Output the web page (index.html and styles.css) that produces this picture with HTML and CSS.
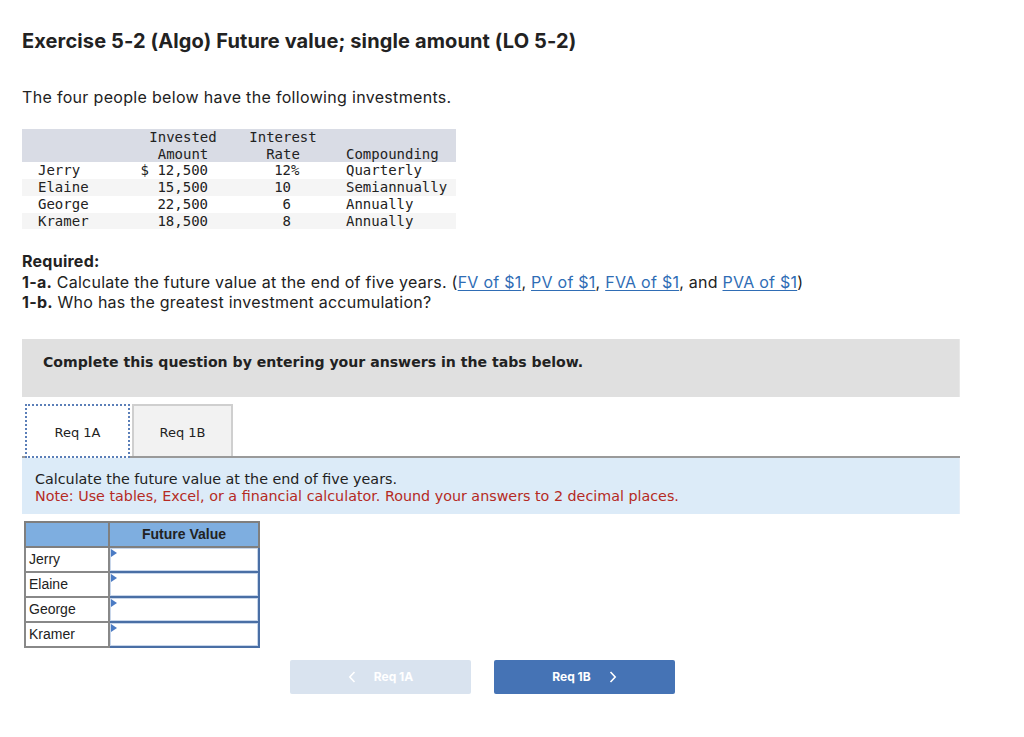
FILE: index.html
```html
<!DOCTYPE html>
<html>
<head>
<meta charset="utf-8">
<link rel="stylesheet" href="styles.css">
</head>
<body>
<div class="page">
  <h1 class="title">Exercise 5-2 (Algo) Future value; single amount (LO 5-2)</h1>
  <p class="intro">The four people below have the following investments.</p>

  <table class="inv">
    <thead>
      <tr>
        <th class="c-name"></th>
        <th class="c-amt">Invested<br>Amount</th>
        <th class="c-rate">Interest<br>Rate</th>
        <th class="c-comp">Compounding</th>
      </tr>
    </thead>
    <tbody>
      <tr><td class="c-name">Jerry</td><td class="c-amt">$ 12,500</td><td class="c-rate">12<span class="pct">%</span></td><td class="c-comp">Quarterly</td></tr>
      <tr class="alt"><td class="c-name">Elaine</td><td class="c-amt">15,500</td><td class="c-rate">10</td><td class="c-comp">Semiannually</td></tr>
      <tr><td class="c-name">George</td><td class="c-amt">22,500</td><td class="c-rate">6</td><td class="c-comp">Annually</td></tr>
      <tr class="alt"><td class="c-name">Kramer</td><td class="c-amt">18,500</td><td class="c-rate">8</td><td class="c-comp">Annually</td></tr>
    </tbody>
  </table>

  <div class="required">
    <div class="req-head">Required:</div>
    <div><b>1-a.</b> Calculate the future value at the end of five years. (<a href="#">FV of $1</a>, <a href="#">PV of $1</a>, <a href="#">FVA of $1</a>, and <a href="#">PVA of $1</a>)</div>
    <div><b>1-b.</b> Who has the greatest investment accumulation?</div>
  </div>

  <div class="complete">Complete this question by entering your answers in the tabs below.</div>

  <div class="tabs">
    <div class="tab active">Req 1A</div>
    <div class="tab">Req 1B</div>
  </div>

  <div class="panel">
    <div>Calculate the future value at the end of five years.</div>
    <div class="note">Note: Use tables, Excel, or a financial calculator. Round your answers to 2 decimal places.</div>
  </div>

  <table class="ans">
    <thead>
      <tr><th class="a-name"></th><th class="a-val">Future Value</th></tr>
    </thead>
    <tbody>
      <tr><td class="a-name">Jerry</td><td class="a-val"><span class="flag"></span></td></tr>
      <tr><td class="a-name">Elaine</td><td class="a-val"><span class="flag"></span></td></tr>
      <tr><td class="a-name">George</td><td class="a-val"><span class="flag"></span></td></tr>
      <tr><td class="a-name">Kramer</td><td class="a-val"><span class="flag"></span></td></tr>
    </tbody>
  </table>

  <div class="nav">
    <div class="btn prev">
      <svg class="chev" width="8" height="12" viewBox="0 0 8 12"><path d="M6.5 1 L1.8 6 L6.5 11" fill="none" stroke="#fff" stroke-width="1.6"/></svg>
      <span>Req 1A</span>
    </div>
    <div class="btn next">
      <span>Req 1B</span>
      <svg class="chev" width="8" height="12" viewBox="0 0 8 12"><path d="M1.5 1 L6.2 6 L1.5 11" fill="none" stroke="#fff" stroke-width="1.6"/></svg>
    </div>
  </div>
</div>
</body>
</html>
```

FILE: styles.css
```css
* { box-sizing: border-box; }
html, body { margin: 0; padding: 0; background: #fff; }
body { font-family: "Inter", "Lato", sans-serif; color: #222; }
.page { padding: 0 64px 0 22px; width: 1024px; }

.title {
  margin: 0;
  padding-top: 29px;
  font-size: 20px;
  line-height: 24px;
  font-weight: 700;
  color: #222;
  letter-spacing: 0.12px;
}
.intro {
  margin: 34px 0 0;
  font-size: 16px;
  line-height: 20px;
  letter-spacing: 0.32px;
}

.inv {
  margin-top: 22px;
  border-collapse: collapse;
  table-layout: fixed;
  font-family: "DejaVu Sans Mono", monospace;
  font-size: 14px;
  line-height: 16.7px;
  color: #222;
}
.inv th { font-weight: 400; background: #d9dce5; vertical-align: bottom; padding: 0; text-align: center; }
.inv td { padding: 0; white-space: nowrap; }
.inv tr.alt td { background: #f5f5f5; }
.inv .c-name { width: 108px; padding-left: 16px; text-align: left; }
.inv .c-amt { width: 106px; }
.inv td.c-amt { text-align: right; padding-right: 28px; }
.inv .c-rate { width: 94px; }
.inv td.c-rate { text-align: right; padding-right: 39px; }
.inv .pct { display: inline-block; width: 0; overflow: visible; }
.inv .c-comp { width: 126px; text-align: left; padding-left: 16px; }
.inv th.c-comp { text-align: left; }

.required { margin-top: 22px; font-size: 16px; line-height: 20.5px; letter-spacing: 0.25px; }
.req-head { font-weight: 700; }
.required b { font-weight: 700; }
.required a { color: #2f6db5; text-decoration: underline; text-underline-offset: 2px; }

.complete {
  margin-top: 26px;
  background: #e0e0e0;
  height: 58px;
  padding: 15px 0 0 21px;
  font-family: "DejaVu Sans", Verdana, sans-serif;
  font-weight: 700;
  font-size: 14.1px;
  color: #222;
  border-right: 1px solid #e8e8e8;
}

.tabs {
  margin-top: 7px;
  display: flex;
  gap: 2px;
  padding-left: 3px;
  border-bottom: 2px solid #9a9a9a;
  height: 54px;
  align-items: flex-end;
}
.tab {
  width: 101px;
  height: 52px;
  background: #f2f2f2;
  border: 2px solid #cfcfcf;
  border-bottom: none;
  font-family: "DejaVu Sans", Verdana, sans-serif;
  font-size: 13px;
  color: #222;
  padding-top: 19px;
  text-align: center;
}
.tab.active {
  width: 105px;
  height: 54px;
  background: #fff;
  border: 2px dotted #5b7fb8;
  margin-bottom: -2px;
  padding-top: 19px;
}

.panel {
  background: #dcebf8;
  height: 56px;
  padding: 13px 0 0 13px;
  font-family: "DejaVu Sans", Verdana, sans-serif;
  font-size: 14.3px;
  line-height: 17px;
  color: #222;
  border-right: 1px solid #e5eef8;
}
.panel .note { color: #b52a24; }

.ans {
  margin: 7px 0 0 2px;
  border-collapse: collapse;
  font-family: "Liberation Sans", Arial, sans-serif;
  font-size: 14px;
}
.ans th {
  background: #7eaee0;
  height: 25px;
  border: 2px solid #7f7f7f;
  font-weight: 700;
  color: #222;
  padding: 0;
}
.ans td { height: 25px; padding: 0; }
.a-name { width: 84px; border: 2px solid #888; text-align: left; }
.ans td.a-name { padding-left: 3px; }
.a-val { width: 150px; border: 2px solid #888; position: relative; }
.ans td.a-val { border: 2px solid #4a6fa5; box-shadow: inset 0 0 0 1px #c8d6ea; }
.flag {
  position: absolute; left: 1px; top: 1px;
  width: 0; height: 0;
  border-top: 4px solid transparent;
  border-bottom: 4px solid transparent;
  border-left: 6px solid #4a7bc4;
}

.nav {
  margin-top: 12px;
  padding-left: 268px;
  display: flex;
  gap: 23px;
}
.btn {
  width: 181px;
  height: 34px;
  border-radius: 2px;
  color: #fff;
  font-family: "Inter", sans-serif;
  font-weight: 700;
  font-size: 12px;
  display: flex;
  align-items: center;
  justify-content: center;
  gap: 18px;
}
.btn.prev { background: #d9e3ef; }
.btn.next { background: #4573b5; }
.chev { display: block; }
```
